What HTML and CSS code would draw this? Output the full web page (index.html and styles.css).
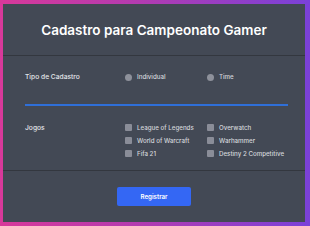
FILE: index.html
```html
<!DOCTYPE html>
<html lang="pt">
<head>
<meta charset="utf-8">
<title>Cadastro para Campeonato Gamer</title>
<link rel="stylesheet" href="styles.css">
</head>
<body>
<div class="card">
  <header class="card-header">
    <h1 class="title">Cadastro para Campeonato Gamer</h1>
  </header>
  <section class="card-body">
    <div class="row row-radio">
      <span class="label">Tipo de Cadastro</span>
      <label class="opt"><span class="radio"></span>Individual</label>
      <label class="opt"><span class="radio"></span>Time</label>
    </div>
    <div class="underline"></div>
    <div class="row row-games">
      <span class="label">Jogos</span>
      <div class="games">
        <label class="opt"><span class="check"></span>League of Legends</label>
        <label class="opt"><span class="check"></span>Overwatch</label>
        <label class="opt"><span class="check"></span>World of Warcraft</label>
        <label class="opt"><span class="check"></span>Warhammer</label>
        <label class="opt"><span class="check"></span>Fifa 21</label>
        <label class="opt"><span class="check"></span>Destiny 2 Competitive</label>
      </div>
    </div>
  </section>
  <footer class="card-footer">
    <button class="btn">Registrar</button>
  </footer>
</div>
</body>
</html>
```
FILE: styles.css
```css
html, body {
  margin: 0;
  padding: 0;
}
body {
  width: 310px;
  height: 226px;
  background: linear-gradient(90deg, #d8399a 0%, #b33bb0 45%, #7a41d9 100%);
  font-family: Inter, "Noto Sans", sans-serif;
  overflow: hidden;
}
.card {
  margin: 4px 5px 4px 3px;
  height: 218px;
  background: #434955;
  display: flex;
  flex-direction: column;
}
.card-header {
  height: 51px;
  display: flex;
  align-items: center;
  justify-content: center;
  border-bottom: 1.5px solid #33373f;
}
.title {
  margin: 0;
  color: #ffffff;
  font-size: 13.5px;
  font-weight: 600;
}
.card-body {
  padding: 16px 17px 0 22px;
  height: 115px;
  box-sizing: border-box;
  border-bottom: 1.5px solid #33373f;
}
.row {
  display: grid;
  grid-template-columns: 100px 1fr;
}
.row-radio {
  grid-template-columns: 100px 82px 1fr;
  height: 10px;
  align-items: center;
}
.label {
  color: #e4e6ea;
  font-size: 6.7px;
  font-weight: 500;
  line-height: 10px;
}
.opt {
  display: flex;
  align-items: center;
  color: #d4d6dc;
  font-size: 6.2px;
  font-weight: 500;
  line-height: 10px;
  white-space: nowrap;
}
.radio {
  width: 7px;
  height: 7px;
  border-radius: 50%;
  background: #8e919b;
  margin-right: 5px;
  flex: none;
}
.check {
  width: 7px;
  height: 7px;
  border-radius: 1px;
  background: #8a8d98;
  margin-right: 5px;
  flex: none;
}
.underline {
  margin-top: 22px;
  height: 2px;
  background: #2f6fd8;
}
.row-games {
  margin-top: 15px;
  align-items: start;
}
.row-games .label {
  margin-top: 2px;
}
.games {
  display: grid;
  grid-template-columns: 82px 1fr;
  grid-auto-rows: 13px;
  align-items: center;
}
.card-footer {
  flex: 1;
  display: flex;
  align-items: center;
  justify-content: center;
}
.btn {
  width: 74px;
  height: 19px;
  border: none;
  border-radius: 2px;
  background: #3467f4;
  color: #ffffff;
  font-family: Inter, "Noto Sans", sans-serif;
  font-size: 6.2px;
  font-weight: 600;
  padding: 0;
}
```
